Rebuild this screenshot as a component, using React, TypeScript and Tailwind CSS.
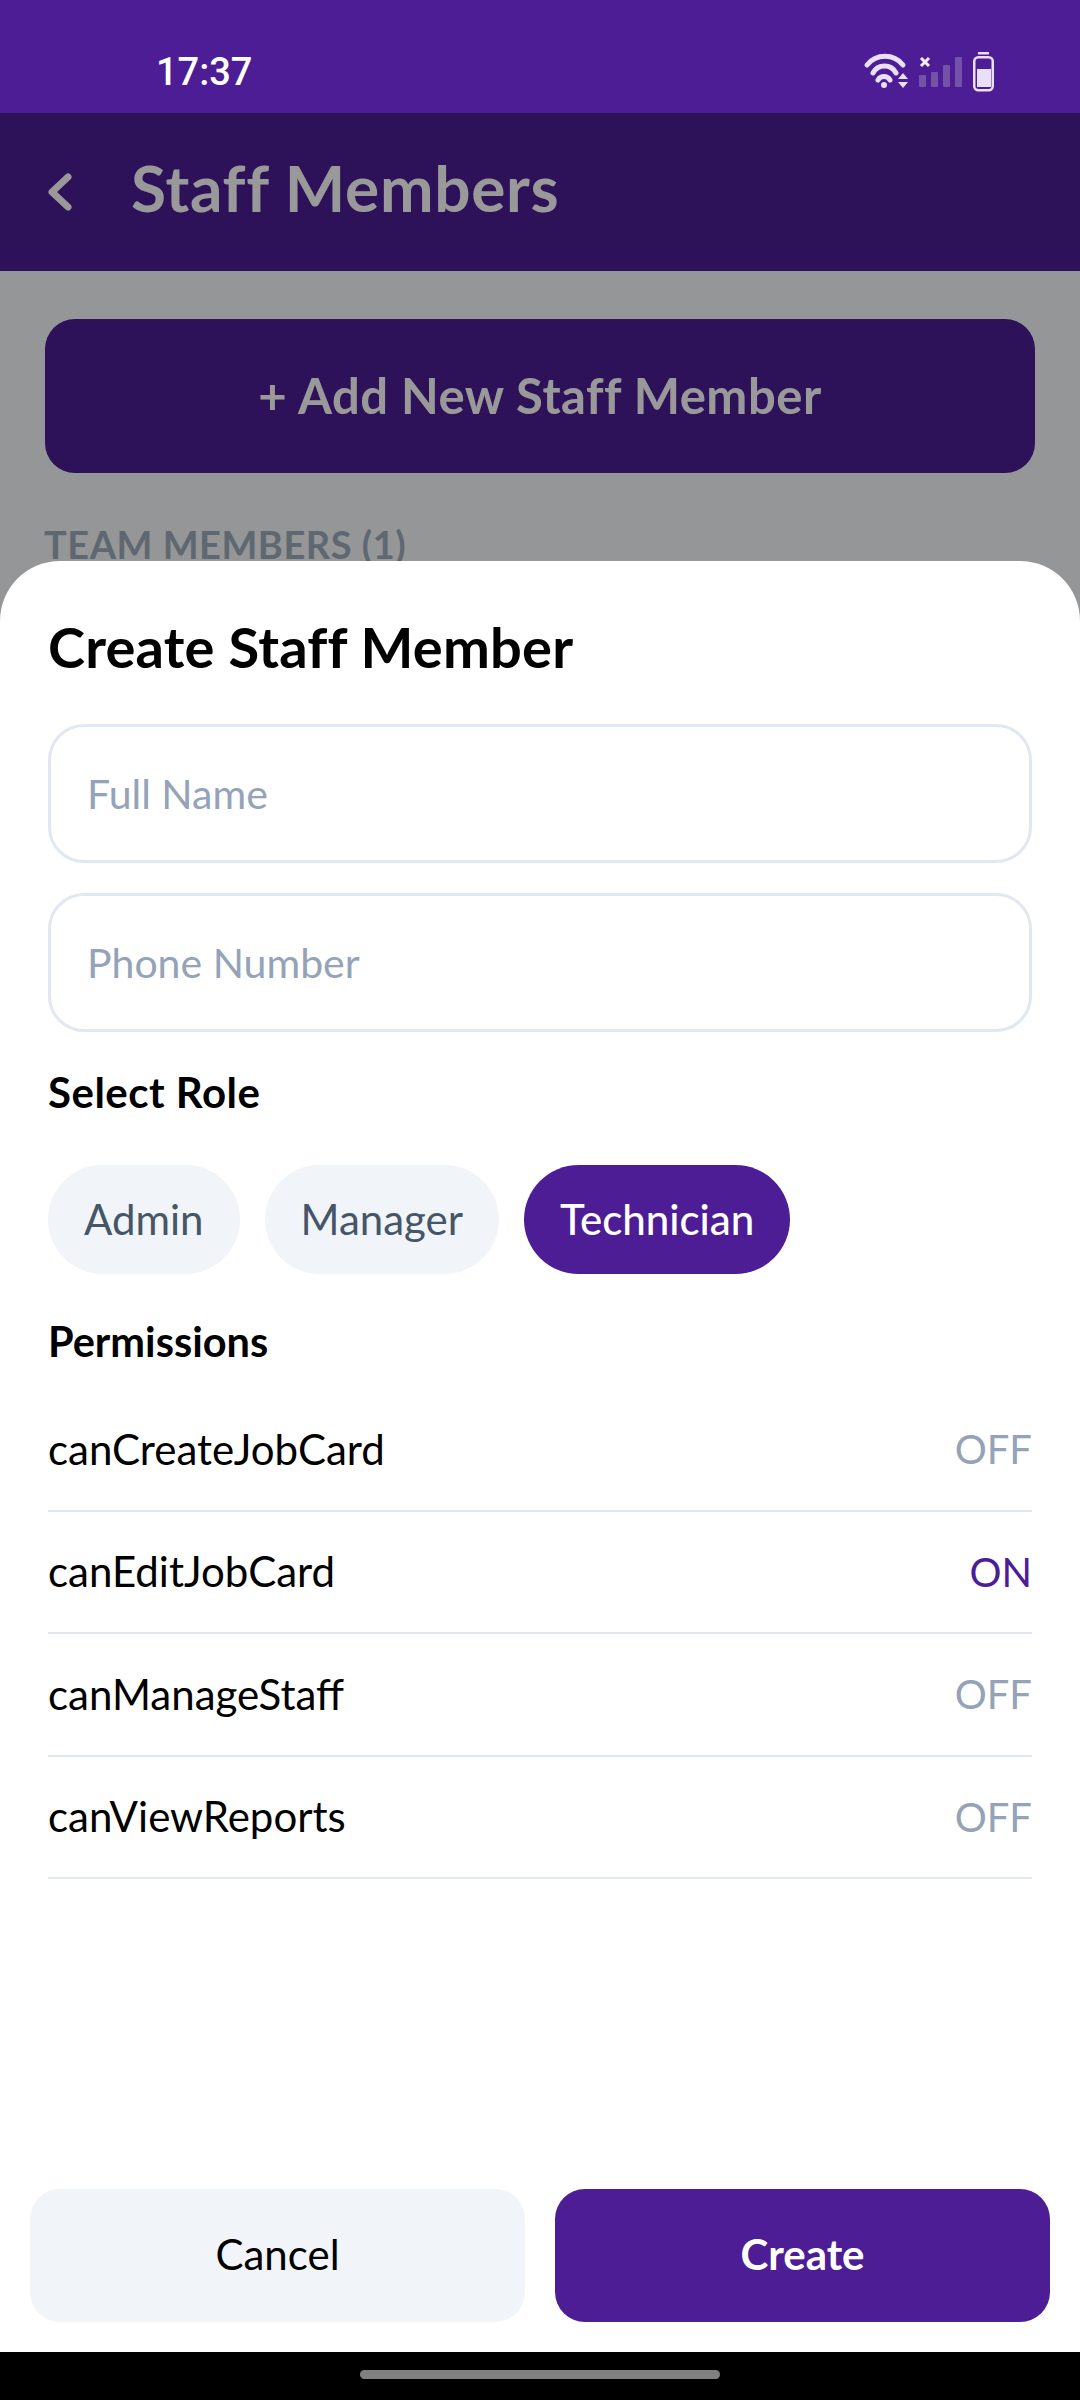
const FONT = "font-['Lato','Noto_Sans',sans-serif]";

const PERMISSIONS = [
  { name: "canCreateJobCard", on: false },
  { name: "canEditJobCard", on: true },
  { name: "canManageStaff", on: false },
  { name: "canViewReports", on: false },
];

const ROLES = [
  { name: "Admin", active: false },
  { name: "Manager", active: false },
  { name: "Technician", active: true },
];

function StatusIcons() {
  return (
    <svg width="132" height="42" viewBox="862 51 132 42" fill="none">
      <path d="M867 65 A 23 23 0 0 1 903 65" stroke="#e9e0f7" strokeWidth="5" strokeLinecap="round" />
      <path d="M873 73 A 13 13 0 0 1 896 73" stroke="#e9e0f7" strokeWidth="5" strokeLinecap="round" />
      <path d="M878 80 A 7 7 0 0 1 890 80" stroke="#e9e0f7" strokeWidth="5" strokeLinecap="round" />
      <circle cx="884" cy="85" r="3" fill="#e9e0f7" />
      <path d="M898 79 L903 73 L908 79 Z M898 82 L908 82 L903 88 Z" fill="#e9e0f7" />
      <path d="M921 58 L929 66 M929 58 L921 66" stroke="#f3eefb" strokeWidth="3" />
      <rect x="919" y="75" width="7" height="12" rx="1" fill="#7452a8" />
      <rect x="931" y="72" width="7" height="15" rx="1" fill="#7452a8" />
      <rect x="943" y="65" width="7" height="22" rx="1" fill="#7452a8" />
      <rect x="955" y="57" width="7" height="30" rx="1" fill="#7452a8" />
      <rect x="978" y="52" width="11" height="2.5" fill="#e9e0f7" />
      <rect x="974.25" y="57.25" width="18.5" height="33" rx="4" stroke="#e9e0f7" strokeWidth="2.5" />
      <rect x="977" y="69" width="14" height="18" fill="#e9e0f7" />
    </svg>
  );
}

function TextField({ placeholder }: { placeholder: string }) {
  return (
    <div className="flex h-[139px] items-center rounded-[36px] border-[3px] border-[#e2e8f0] px-[36px] text-[41px] text-[#94a3b8]">
      {placeholder}
    </div>
  );
}

export default function App() {
  return (
    <div className={`relative flex h-[2400px] w-[1080px] flex-col overflow-hidden bg-[#f8fafc] ${FONT}`}>
      <div className="flex h-[113px] items-center justify-between bg-[#4c1d95] pt-[31px] pl-[156px] pr-[86px]">
        <span className="font-['Roboto',sans-serif] text-[38px] font-medium text-white">17:37</span>
        <StatusIcons />
      </div>

      <div className="flex h-[158px] items-center bg-[#4c1d95] pl-[48px]">
        <svg width="24" height="38" viewBox="0 0 24 38" fill="none">
          <path d="M20 4 L4 19 L20 34" stroke="white" strokeWidth="7" strokeLinecap="round" strokeLinejoin="round" />
        </svg>
        <h1 className="mb-[9px] ml-[59px] text-[64px] font-bold tracking-[0.7px] text-white">Staff Members</h1>
      </div>

      <div className="flex-1 px-[45px] pt-[48px]">
        <div className="flex h-[154px] items-center justify-center rounded-[30px] bg-[#4c1d95] text-[49px] font-bold tracking-[0.5px] text-white">
          + Add New Staff Member
        </div>
        <p className="mt-[43px] -ml-[1px] text-[38px] font-bold tracking-[0.5px] text-[#9eadbc]">TEAM MEMBERS (1)</p>
      </div>

      <div className="h-[48px] bg-black" />

      <div className="absolute inset-x-0 top-[113px] bottom-[48px] flex flex-col justify-end bg-black/40">
        <div className="flex h-[1791px] flex-col rounded-t-[60px] bg-white">
          <div className="flex flex-1 flex-col px-[48px] pt-[53px]">
            <h2 className="text-[56px] leading-[66px] font-bold tracking-[0.2px] text-black">Create Staff Member</h2>
            <div className="mt-[44px] flex flex-col gap-[30px]">
              <TextField placeholder="Full Name" />
              <TextField placeholder="Phone Number" />
            </div>
            <h3 className="mt-[36px] text-[42px] leading-[48px] font-bold tracking-[0.5px] text-black">Select Role</h3>
            <div className="mt-[49px] flex gap-[25px]">
              {ROLES.map((role) => (
                <div
                  key={role.name}
                  className={`flex h-[109px] items-center rounded-full px-[36px] text-[42px] ${
                    role.active ? "bg-[#4c1d95] font-medium text-white" : "bg-[#f1f5f9] text-[#475569]"
                  }`}
                >
                  {role.name}
                </div>
              ))}
            </div>
            <h3 className="mt-[43px] text-[41.5px] leading-[48px] font-bold text-black">Permissions</h3>
            <div className="mt-[24px] flex flex-col">
              {PERMISSIONS.map((perm) => (
                <div
                  key={perm.name}
                  className="flex h-[122.5px] items-center justify-between border-b-2 border-[#e2e8f0] text-[42px]"
                >
                  <span className="text-black">{perm.name}</span>
                  <span className={`text-[40px] ${perm.on ? "text-[#4c1d95]" : "text-[#94a3b8]"}`}>
                    {perm.on ? "ON" : "OFF"}
                  </span>
                </div>
              ))}
            </div>
          </div>
          <div className="flex gap-[30px] px-[30px] pb-[30px]">
            <div className="flex h-[133px] flex-1 items-center justify-center rounded-[30px] bg-[#f1f5f9] pb-[2px] text-[42px] text-black">
              Cancel
            </div>
            <div className="flex h-[133px] flex-1 items-center justify-center rounded-[30px] bg-[#4c1d95] pb-[2px] text-[42px] font-bold text-white">
              Create
            </div>
          </div>
        </div>
      </div>

      <div className="absolute bottom-[21px] left-[360px] h-[9px] w-[360px] rounded-full bg-[#808080]" />
    </div>
  );
}
